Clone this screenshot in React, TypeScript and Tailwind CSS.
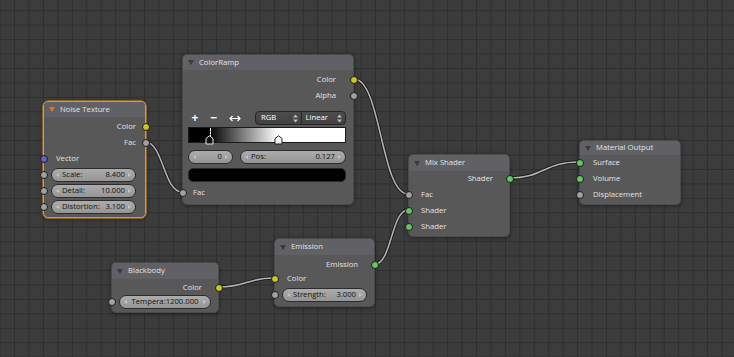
import React from 'react';

type Pt = [number, number];

// bezier between two sockets, handles pulled out horizontally like the node editor does
const linkPath = (a: Pt, b: Pt) => {
  const h = Math.max(Math.abs(b[0] - a[0]) * 0.5, 12);
  return `M${a[0]} ${a[1]} C${a[0] + h} ${a[1]} ${b[0] - h} ${b[1]} ${b[0]} ${b[1]}`;
};

const links: [Pt, Pt][] = [
  [[145, 142], [182, 192]],
  [[354, 79], [408, 194]],
  [[375, 264], [408, 210]],
  [[509, 178], [579, 162]],
  [[219, 287], [274, 278]],
];

const Socket = ({ side, color }: { side: 'left' | 'right'; color: string }) => (
  <span
    className={`absolute top-1/2 -translate-y-1/2 w-[8px] h-[8px] rounded-full border border-[#1c1c1c] ${color} ${
      side === 'left' ? 'left-[-4.5px]' : 'right-[-4.5px]'
    }`}
  />
);

const YELLOW = 'bg-[#c7c729]';
const GRAY = 'bg-[#a1a1a1]';
const GREEN = 'bg-[#63c763]';
const BLUE = 'bg-[#6363c7]';

const Out = ({ label, color, pr, h = 'h-[16px]' }: { label: string; color: string; pr: string; h?: string }) => (
  <div className={`relative ${h} flex items-center justify-end ${pr}`}>
    <span>{label}</span>
    <Socket side="right" color={color} />
  </div>
);

const In = ({ label, color, pl = 'pl-[12px]', h = 'h-[16px]' }: { label: string; color: string; pl?: string; h?: string }) => (
  <div className={`relative ${h} flex items-center ${pl}`}>
    <span>{label}</span>
    <Socket side="left" color={color} />
  </div>
);

const Arrow = ({ dir }: { dir: 'l' | 'r' }) => (
  <span
    className={`w-0 h-0 border-y-[2.5px] border-y-transparent ${
      dir === 'l' ? 'border-r-[3px] border-r-[#c4c4c4]' : 'border-l-[3px] border-l-[#c4c4c4]'
    }`}
  />
);

const Field = ({ label, value, center }: { label?: string; value: string; center?: boolean }) => (
  <div className="h-[14px] rounded-full border border-[#2c2c2c] bg-gradient-to-b from-[#acacac] to-[#959595] flex items-center px-[4px] text-[#111]">
    <Arrow dir="l" />
    {center ? (
      <span className="flex-1 text-center">
        {label}
        {value}
      </span>
    ) : (
      <>
        {label && <span className="ml-[3px]">{label}</span>}
        <span className="ml-auto mr-[3px]">{value}</span>
      </>
    )}
    <Arrow dir="r" />
  </div>
);

const InField = ({ label, value, px, center, color = GRAY, h = 'h-[16px]' }: { label?: string; value: string; px: string; center?: boolean; color?: string; h?: string }) => (
  <div className={`relative ${h} flex flex-col justify-center ${px}`}>
    <Field label={label} value={value} center={center} />
    <Socket side="left" color={color} />
  </div>
);

const SELECTED = 'border-[#f0951c] shadow-[0_0_0_0.5px_#f0951c,0_1px_4px_rgba(0,0,0,0.45)]';
const NORMAL = 'border-[#4b4b4b] shadow-[0_1px_4px_rgba(0,0,0,0.45)]';

const Node = ({
  pos,
  title,
  selected,
  header = 'h-[15px]',
  children,
}: {
  pos: string;
  title: string;
  selected?: boolean;
  header?: string;
  children: React.ReactNode;
}) => (
  <div className={`absolute ${pos} rounded-[5px] bg-[#5b5b5b]/[0.92] border ${selected ? SELECTED : NORMAL}`}>
    <div className={`${header} flex items-center pl-[5px] rounded-t-[4px] bg-[#626267]/[0.9]`}>
      <span
        className={`w-0 h-0 border-x-[3px] border-x-transparent border-t-[5px] ${
          selected ? 'border-t-[#ee6e1c]' : 'border-t-[#3a3a3a]'
        }`}
      />
      <span className="ml-[5px]">{title}</span>
    </div>
    {children}
  </div>
);

const UpDown = () => (
  <svg width="5" height="9" viewBox="0 0 5 9" className="shrink-0">
    <path d="M0 3.5 L2.5 0.5 L5 3.5 Z M0 5.5 L2.5 8.5 L5 5.5 Z" fill="#bdbdbd" />
  </svg>
);

const Marker = ({ fill, stroke, className }: { fill: string; stroke: string; className: string }) => (
  <svg width="9" height="10" viewBox="0 0 9 10" className={`absolute ${className}`}>
    <path d="M1 3.5 L4.5 0.8 L8 3.5 L8 9 L1 9 Z" fill={fill} stroke={stroke} strokeWidth="1" />
  </svg>
);

export default function App() {
  return (
    <div
      className="relative w-[734px] h-[357px] overflow-hidden bg-[#3c3c3c] bg-[linear-gradient(to_right,#2f2f2f_1px,transparent_1px),linear-gradient(to_bottom,#2f2f2f_1px,transparent_1px)] bg-[size:14.44px_14.44px] bg-[position:-0.4px_10.2px] text-[7.7px] text-[#e4e4e4] font-['Open_Sans',sans-serif] leading-none"
    >
      <svg className="absolute inset-0" width="734" height="357">
        {links.map(([a, b], i) => (
          <g key={i} fill="none">
            <path d={linkPath(a, b)} stroke="#1d1d1d" strokeWidth="3.4" />
            <path d={linkPath(a, b)} stroke="#b4b4b4" strokeWidth="1.5" />
          </g>
        ))}
      </svg>

      {/* Noise Texture */}
      <Node pos="left-[43px] top-[101px] w-[103px]" title="Noise Texture" selected>
        <div className="pt-[2px] pb-[2px]">
          <Out label="Color" color={YELLOW} pr="pr-[9px]" />
          <Out label="Fac" color={GRAY} pr="pr-[9px]" />
          <In label="Vector" color={BLUE} />
          <InField label="Scale:" value="8.400" px="pl-[7px] pr-[9px]" />
          <InField label="Detail:" value="10.000" px="pl-[7px] pr-[9px]" />
          <InField label="Distortion:" value="3.100" px="pl-[7px] pr-[9px]" />
        </div>
      </Node>

      {/* ColorRamp */}
      <Node pos="left-[182px] top-[54px] w-[172px]" title="ColorRamp">
        <div className="pt-[2px] pb-[3px]">
          <Out label="Color" color={YELLOW} pr="pr-[17px]" />
          <Out label="Alpha" color={GRAY} pr="pr-[17px]" />
          <div className="pl-[5px] pr-[7px]">
            <div className="mt-[7px] h-[14px] flex items-center text-white">
              <span className="w-[14px] text-center text-[12px] font-bold">+</span>
              <span className="ml-[5px] w-[14px] text-center text-[12px] font-bold">−</span>
              <span className="ml-[7px] w-[14px] flex justify-center">
                <svg width="12" height="7" viewBox="0 0 12 7">
                  <path d="M1 3.5 H11 M3.5 1 L1 3.5 L3.5 6 M8.5 1 L11 3.5 L8.5 6" stroke="#fff" strokeWidth="1.2" fill="none" />
                </svg>
              </span>
              <div className="ml-auto w-[91px] h-[14px] flex rounded-[4px] border border-[#262626] bg-gradient-to-b from-[#4c4c4c] to-[#414141]">
                <div className="flex-1 flex items-center pl-[5px] pr-[3px] border-r border-[#2a2a2a]">
                  <span>RGB</span>
                  <span className="ml-auto">
                    <UpDown />
                  </span>
                </div>
                <div className="flex-1 flex items-center pl-[4px] pr-[3px]">
                  <span>Linear</span>
                  <span className="ml-auto">
                    <UpDown />
                  </span>
                </div>
              </div>
            </div>
            <div className="relative mt-[2px] h-[16px] border border-[#1a1a1a] bg-[linear-gradient(to_right,#000_0%,#000_13%,#fff_57%,#fff_100%)]">
              <span className="absolute left-[20.5px] top-0 h-[10px] border-l border-dashed border-l-white" />
              <Marker fill="#111" stroke="#e8e8e8" className="left-[16px] top-[7px]" />
              <Marker fill="#f4f4f4" stroke="#222" className="left-[85px] top-[7px]" />
            </div>
            <div className="mt-[7px] flex">
              <div className="w-[45px]">
                <Field value="0" />
              </div>
              <div className="ml-[7px] flex-1">
                <Field label="Pos:" value="0.127" />
              </div>
            </div>
            <div className="mt-[4px] h-[14px] rounded-[5px] bg-black border border-[#2a2a2a]" />
          </div>
          <div className="mt-[3px]">
            <In label="Fac" color={GRAY} pl="pl-[10px]" />
          </div>
        </div>
      </Node>

      {/* Mix Shader */}
      <Node pos="left-[408px] top-[154px] w-[102px]" title="Mix Shader" header="h-[16px]">
        <div className="pb-[1px]">
          <Out label="Shader" color={GREEN} pr="pr-[16px]" />
          <In label="Fac" color={GRAY} />
          <In label="Shader" color={GREEN} />
          <In label="Shader" color={GREEN} />
        </div>
      </Node>

      {/* Material Output */}
      <Node pos="left-[579px] top-[140px] w-[102px]" title="Material Output" header="h-[14px]">
        <div className="pb-[1px]">
          <In label="Surface" color={GREEN} pl="pl-[13px]" />
          <In label="Volume" color={GREEN} pl="pl-[13px]" />
          <In label="Displacement" color={GRAY} pl="pl-[13px]" />
        </div>
      </Node>

      {/* Blackbody */}
      <Node pos="left-[111px] top-[262px] w-[108px]" title="Blackbody" header="h-[16px]">
        <div className="pt-[1px] pb-[3px]">
          <Out label="Color" color={YELLOW} pr="pr-[16px]" h="h-[15px]" />
          <InField label="Tempera:" value="1200.000" px="px-[7px]" center h="h-[14px]" />
        </div>
      </Node>

      {/* Emission */}
      <Node pos="left-[274px] top-[238px] w-[101px]" title="Emission" header="h-[16px]">
        <div className="pt-[2px] pb-[3px]">
          <Out label="Emission" color={GREEN} pr="pr-[16px]" h="h-[15px]" />
          <In label="Color" color={YELLOW} h="h-[14px]" />
          <InField label="Strength:" value="3.000" px="pl-[7px] pr-[7px]" h="h-[17px]" />
        </div>
      </Node>
    </div>
  );
}
